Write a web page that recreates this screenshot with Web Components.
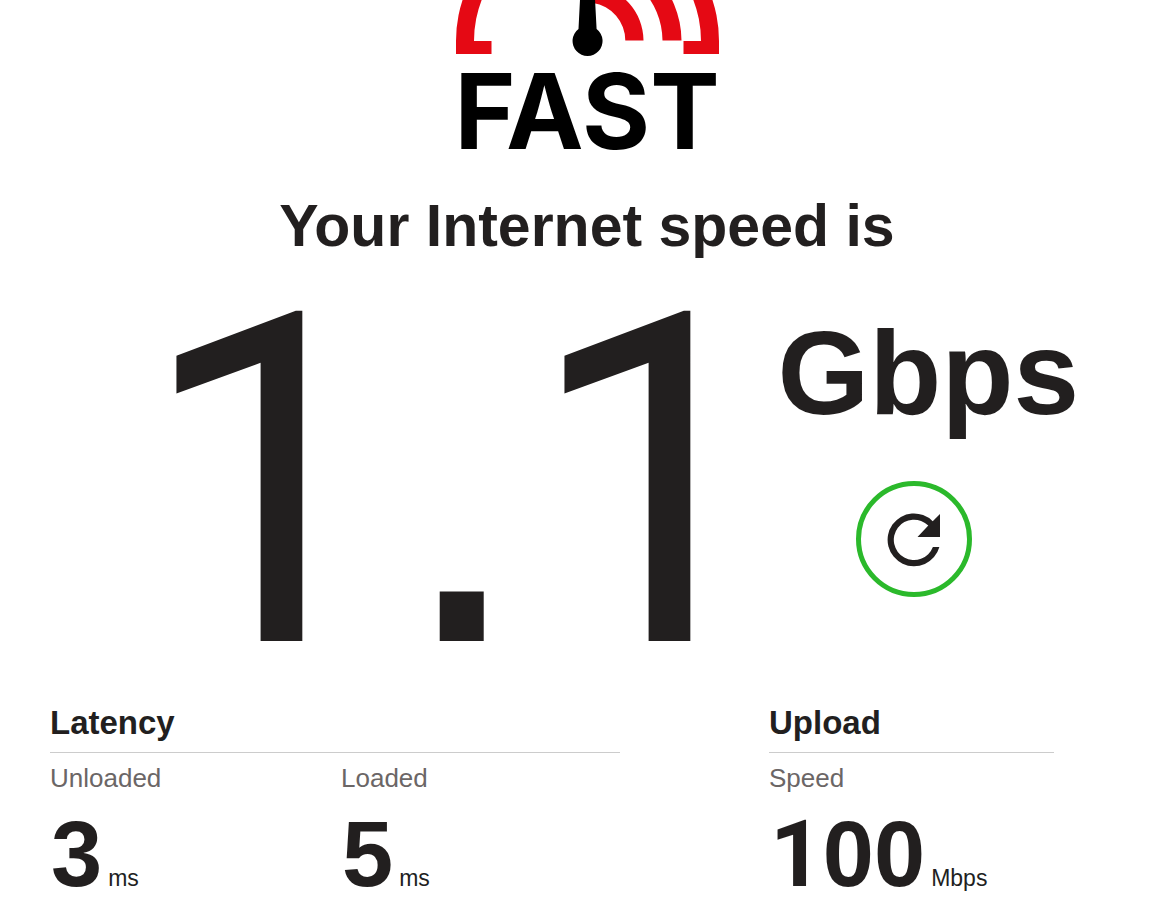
<!DOCTYPE html>
<html lang="en">
<head>
<meta charset="utf-8">
<title>Internet Speed Test</title>
<style>
  body { margin: 0; background: #fff; color: #221f1f; font-family: "Liberation Sans", Arial, sans-serif; }
</style>
</head>
<body>
<speed-page>
  <speed-logo slot="logo"></speed-logo>
  <span slot="title">Your Internet speed is</span>
  <speed-result slot="result" value="1.1" unit="Gbps"></speed-result>
  <stat-group slot="stats" heading="Latency">
    <stat-value label="Unloaded" unit="ms">3</stat-value>
    <stat-value label="Loaded" unit="ms">5</stat-value>
  </stat-group>
  <stat-group slot="stats" heading="Upload">
    <stat-value label="Speed" unit="Mbps" wide>100</stat-value>
  </stat-group>
</speed-page>

<script>
const define = (name, html, setup) => {
  const template = document.createElement('template');
  template.innerHTML = html;
  customElements.define(name, class extends HTMLElement {
    constructor() {
      super();
      this.attachShadow({ mode: 'open' }).append(template.content.cloneNode(true));
    }
    connectedCallback() { if (setup) setup(this, this.shadowRoot); }
  });
};

define('speed-page', `
<style>
  :host { display: block; padding: 0 42px 0 50px; }
  header { display: flex; justify-content: center; }
  h1 { margin: 30px 0 23px; font-size: 59px; line-height: 68px; font-weight: bold; text-align: center; }
  .stats { display: grid; grid-template-columns: 2fr 1fr; column-gap: 149px; padding-right: 70px; margin-top: 20px; }
</style>
<header><slot name="logo"></slot></header>
<main>
  <h1><slot name="title"></slot></h1>
  <slot name="result"></slot>
  <div class="stats"><slot name="stats"></slot></div>
</main>`);

define('speed-logo', `
<style>
  :host { display: block; }
  a { display: flex; flex-direction: column; align-items: center; color: #000; text-decoration: none; }
  svg { display: block; }
  span { font: 700 104px/102px Inter, sans-serif; }
</style>
<a href="#">
  <svg width="264" height="60" viewBox="-1 0 264 60" aria-hidden="true">
    <g fill="#e50914">
      <path d="M0 54V41A131.5 131.5 0 0 1 131.500 -90.500A131.500 131.500 0 0 1 263 41V54H227.500V41H245A113.500 113.500 0 0 0 18 41H35.500V54Z"/>
      <path d="M131.500 -53A94 94 0 0 1 225.500 40.500H206.500A75 75 0 0 0 131.500 -34Z"/>
      <path d="M137 -15A56 56 0 0 1 187.500 40.500H169.300A38 38 0 0 0 137 3Z"/>
    </g>
    <path d="M125 -20H138L140.600 29A15 15 0 1 1 122.500 29Z"/>
  </svg>
  <span>FAST</span>
</a>`);

define('speed-result', `
<style>
  :host { display: flex; justify-content: center; padding-left: 43px; }
  .value { margin-right: -8px; font: 400 462px/400px Roboto, sans-serif; }
  .point { font-family: "Liberation Sans", Arial, sans-serif; line-height: 0; }
  .side { display: flex; flex-direction: column; align-items: center; padding-top: 24px; }
  .unit { font-size: 118px; line-height: 132px; font-weight: bold; }
  button { display: grid; place-items: center; width: 116px; height: 116px; margin: 42px 28px 0 0; padding: 0;
    border: 5px solid #2bb92b; border-radius: 50%; background: none; color: inherit; cursor: pointer; }
  svg { display: block; }
</style>
<div class="value"><span class="whole"></span><span class="point">.</span><span class="tenths"></span></div>
<div class="side">
  <div class="unit"></div>
  <button type="button" aria-label="Restart speed test">
    <svg width="56" height="56" viewBox="0 0 56 56" aria-hidden="true">
      <path d="M53.400 36A26.400 26.400 0 1 1 46.700 10.200L54 3V26H31.500L42.300 14.600A20.200 20.200 0 1 0 46.900 36Z" fill="currentColor"/>
    </svg>
  </button>
</div>`, (host, root) => {
  const [whole, tenths] = host.getAttribute('value').split('.');
  root.querySelector('.whole').textContent = whole;
  root.querySelector('.tenths').textContent = tenths;
  root.querySelector('.unit').textContent = host.getAttribute('unit');
});

define('stat-group', `
<style>
  :host { display: block; }
  h2 { margin: 0 0 9px; padding-bottom: 9px; border-bottom: 1px solid #ccc; font-size: 33px; line-height: 40px; }
  .items { display: grid; grid-auto-flow: column; grid-auto-columns: 1fr; column-gap: 12px; }
</style>
<section><h2></h2><div class="items"><slot></slot></div></section>`,
(host, root) => { root.querySelector('h2').textContent = host.getAttribute('heading'); });

define('stat-value', `
<style>
  :host { display: block; }
  .label { margin-bottom: 10px; font-size: 26px; line-height: 32px; color: #6b6666; }
  .row { display: flex; align-items: baseline; gap: 6px; padding-left: 1px; }
  .number { font-size: 92px; line-height: 100px; font-weight: bold; }
  :host([wide]) .number::first-letter { font-family: Roboto, sans-serif; line-height: 0; }
  .unit { font-size: 23px; }
</style>
<div class="label"></div>
<div class="row"><div class="number"><slot></slot></div><span class="unit"></span></div>`,
(host, root) => {
  root.querySelector('.label').textContent = host.getAttribute('label');
  root.querySelector('.unit').textContent = host.getAttribute('unit');
});
</script>
</body>
</html>
